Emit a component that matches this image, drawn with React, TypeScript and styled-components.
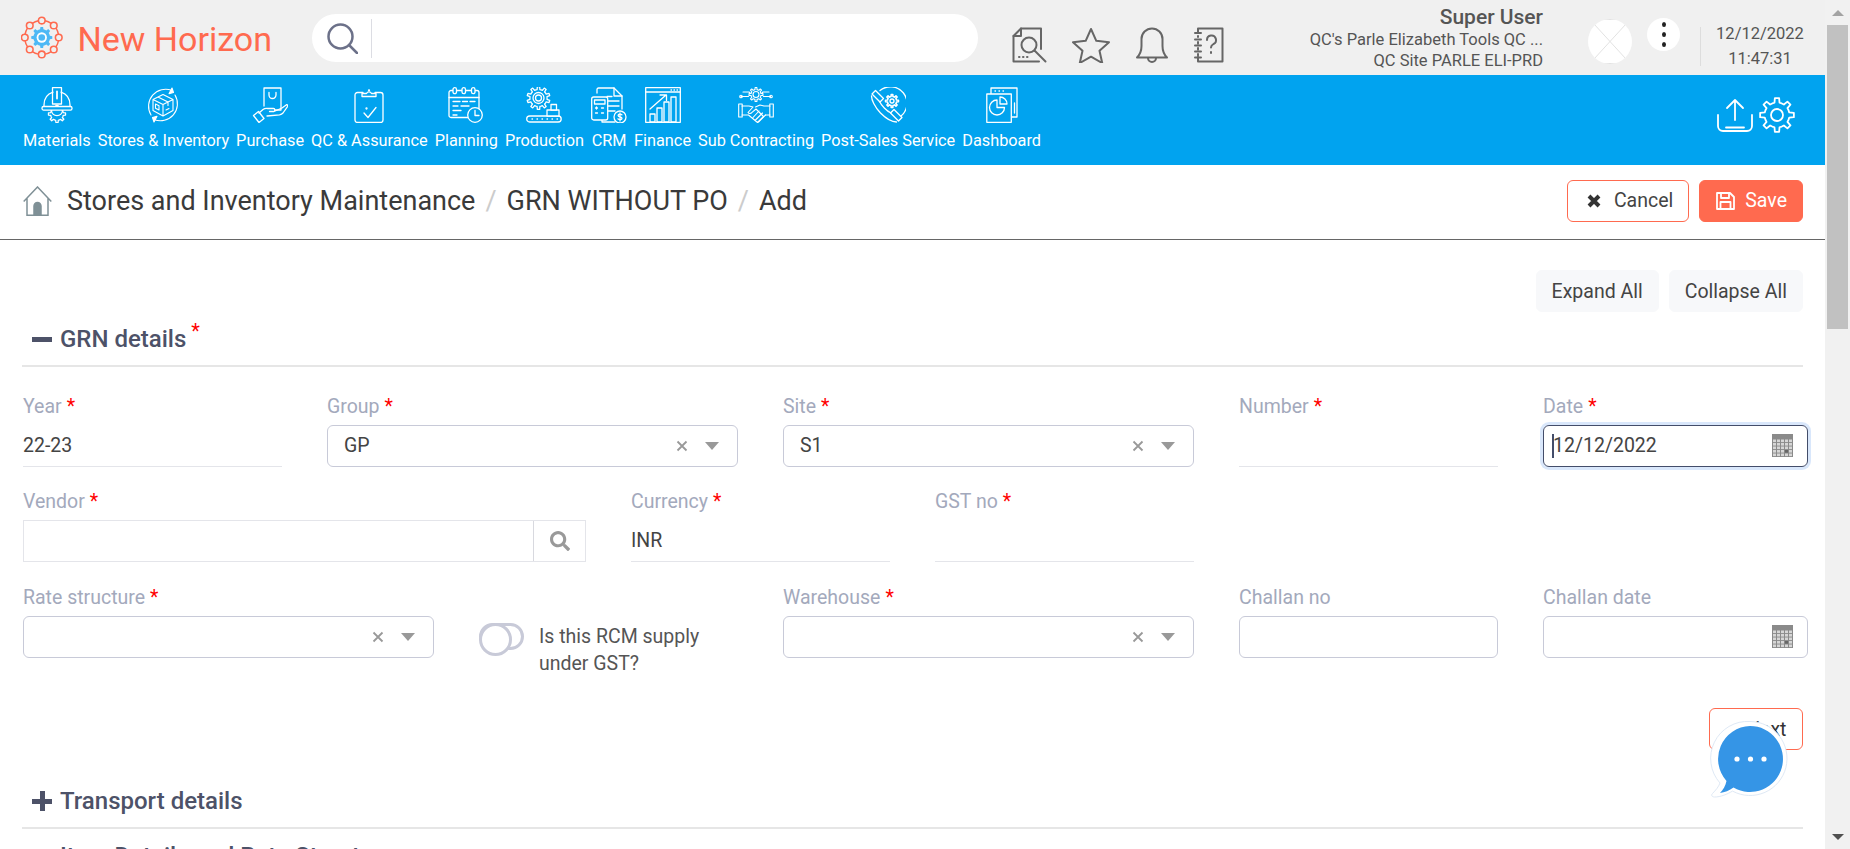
import React from 'react';
import styled, { createGlobalStyle } from 'styled-components';
import { FaSearch } from 'react-icons/fa';

const GlobalStyle = createGlobalStyle`
  html, body {
    margin: 0;
    padding: 0;
    overflow: hidden;
    background: #fff;
    font-family: Roboto, "Liberation Sans", sans-serif;
  }
  * { box-sizing: border-box; }
`;

const BLUE = '#01a3ef';
const CORAL = '#ff6a4f';

const Frame = styled.div`
  position: relative;
  display: flex;
  width: 1850px;
  height: 849px;
  overflow: hidden;
`;

const Main = styled.div`
  width: 1825px;
  flex: none;
`;

const ScrollTrack = styled.div`
  width: 25px;
  height: 849px;
  background: #f1f1f1;
  display: flex;
  flex-direction: column;
  align-items: center;
`;

const ScrollArrow = styled.div<{ $down?: boolean }>`
  height: 25px;
  width: 100%;
  flex: none;
  display: flex;
  align-items: center;
  justify-content: center;
  &::before {
    content: '';
    border-left: 6px solid transparent;
    border-right: 6px solid transparent;
    ${(p) => (p.$down ? 'border-top: 6px solid #505050;' : 'border-bottom: 6px solid #a3a3a3;')}
  }
`;

const ScrollThumb = styled.div`
  width: 21px;
  height: 304px;
  flex: none;
  background: #c1c1c1;
`;

const ScrollSpacer = styled.div`
  flex: 1;
`;

const TopBar = styled.header`
  height: 75px;
  background: #f0f0f0;
  display: flex;
  align-items: center;
  padding-left: 21px;
`;

const Brand = styled.div`
  display: flex;
  align-items: center;
  gap: 15px;
  width: 251px;
  flex: none;
  color: ${CORAL};
  font-size: 34px;
  line-height: 45px;
  white-space: nowrap;
`;

const BrandName = styled.span`
  padding-top: 3px;
`;

const SearchPill = styled.div`
  width: 666px;
  height: 48px;
  flex: none;
  margin-left: 40px;
  margin-top: 1px;
  border-radius: 24px;
  background: #fff;
  display: flex;
  align-items: center;
  padding-left: 15px;
`;

const SearchDivider = styled.div`
  width: 1px;
  height: 39px;
  margin-left: 13px;
  background: #dcdde3;
`;

const TopIcons = styled.div`
  display: flex;
  align-items: center;
  gap: 24px;
  margin-left: 34px;
  margin-top: 15px;
  flex: none;
`;

const UserBlock = styled.div`
  width: 319px;
  flex: none;
  text-align: right;
  color: #555;
  margin-top: 3px;
`;

const UserName = styled.div`
  font-size: 21px;
  font-weight: 500;
  line-height: 25px;
  margin-top: -2px;
  color: #555;
`;

const UserLine = styled.div`
  font-size: 16.5px;
  line-height: 20.5px;
`;

const Avatar = styled.div`
  width: 44px;
  height: 45px;
  flex: none;
  margin-left: 45px;
  margin-top: 8px;
  border-radius: 50%;
  background: #fff;
  overflow: hidden;
`;

const KebabButton = styled.div`
  width: 33px;
  height: 33px;
  flex: none;
  margin-left: 15px;
  margin-bottom: 6px;
  border-radius: 50%;
  background: #fff;
  display: flex;
  flex-direction: column;
  align-items: center;
  justify-content: center;
  gap: 5px;
`;

const KebabDot = styled.span`
  width: 4px;
  height: 5px;
  border-radius: 50%;
  background: #222;
`;

const TimeBlock = styled.div`
  width: 119px;
  height: 39px;
  flex: none;
  margin-left: 20px;
  margin-top: 18px;
  border-left: 1px solid #dddddd;
  display: flex;
  flex-direction: column;
  justify-content: center;
  align-items: center;
  font-size: 16.5px;
  line-height: 24.5px;
  color: #555;
`;

const NavBar = styled.nav`
  height: 90px;
  background: ${BLUE};
  display: flex;
  align-items: flex-start;
  justify-content: space-between;
  padding: 12px 30px 0 23px;
`;

const NavList = styled.div`
  display: flex;
  gap: 7px;
`;

const NavItem = styled.div`
  display: flex;
  flex-direction: column;
  align-items: center;
  color: #fff;
  font-size: 16.3px;
  line-height: 20px;
  white-space: nowrap;
  gap: 8px;
`;

const NavTools = styled.div`
  display: flex;
  align-items: center;
  gap: 6px;
  margin-top: 10px;
`;

const Crumbs = styled.div`
  height: 75px;
  border-bottom: 1.5px solid #666;
  display: flex;
  align-items: center;
  justify-content: space-between;
  padding: 0 22px 3px 23px;
`;

const CrumbTrail = styled.div`
  display: flex;
  align-items: center;
  font-size: 27px;
  color: #3a3a3a;
  white-space: nowrap;
`;

const CrumbHome = styled.span`
  display: flex;
  margin-right: 15px;
`;

const CrumbSlash = styled.span`
  color: #ccc;
  margin: 0 10px;
`;

const ButtonRow = styled.div`
  display: flex;
  gap: 10px;
  justify-content: flex-end;
`;

const Button = styled.button<{ $kind: 'outline' | 'solid' | 'soft' }>`
  height: 42px;
  padding: 0 15px;
  border-radius: 6px;
  display: flex;
  align-items: center;
  gap: 12px;
  font-family: inherit;
  font-size: 19.5px;
  white-space: nowrap;
  border: 1.5px solid
    ${(p) => (p.$kind === 'soft' ? '#f7f8fa' : CORAL)};
  background: ${(p) =>
    p.$kind === 'solid' ? CORAL : p.$kind === 'soft' ? '#f7f8fa' : '#fff'};
  color: ${(p) => (p.$kind === 'solid' ? '#fff' : '#444')};
`;

const CancelButton = styled(Button)`
  padding: 0 15px 0 19px;
  gap: 13px;
`;

const SaveButton = styled(Button)`
  padding: 0 15px 0 16px;
  gap: 10px;
`;

const Content = styled.div`
  padding: 0 22px 0 23px;
`;

const AllActions = styled(ButtonRow)`
  margin-top: 30px;
`;

const SectionHead = styled.div`
  height: 55px;
  margin-left: -1px;
  border-bottom: 2px solid #e6e6e6;
  display: flex;
  align-items: center;
  gap: 8px;
  padding-left: 10px;
  font-size: 24px;
  font-weight: 500;
  color: #4d5268;
  white-space: nowrap;
`;

const SectionStar = styled.sup`
  color: #ff0000;
  font-size: 20px;
  font-weight: 400;
  line-height: 0;
  margin-left: 5px;
  vertical-align: 9px;
`;

const SectionSign = styled.span<{ $open?: boolean }>`
  position: relative;
  width: 20px;
  height: 20px;
  flex: none;
  &::before {
    content: '';
    position: absolute;
    left: 0;
    right: 0;
    top: 8px;
    height: 5px;
    background: #4d5268;
  }
  &::after {
    content: '';
    display: ${(p) => (p.$open ? 'none' : 'block')};
    position: absolute;
    top: 0;
    bottom: 0;
    left: 8px;
    width: 5px;
    background: #4d5268;
  }
`;

const Form = styled.div`
  padding-top: 27.5px;
`;

const FormRow = styled.div`
  display: grid;
  grid-template-columns: repeat(12, 1fr);
  column-gap: 45px;
  height: 95.5px;
  margin-right: 1px;
`;

const FieldGroup = styled.div<{ $span: number }>`
  grid-column: span ${(p) => p.$span};
  min-width: 0;
`;

const Label = styled.div`
  height: 24px;
  margin-bottom: 6px;
  font-size: 19.5px;
  line-height: 24px;
  color: #a3a9bc;
`;

const Star = styled.span`
  color: #ff0000;
  margin-left: 5px;
`;

const LineField = styled.div`
  height: 42px;
  border-bottom: 1.5px solid #e4e5ea;
  display: flex;
  align-items: center;
  font-size: 19.5px;
  color: #444;
`;

const BoxField = styled.div<{ $focus?: boolean; $wide?: boolean }>`
  height: 42px;
  border: 1.5px solid ${(p) => (p.$focus ? '#434d6a' : '#c8cad8')};
  border-radius: 6px;
  display: flex;
  align-items: center;
  font-size: 19.5px;
  color: #444;
  padding: 0 14px 0 16px;
  ${(p) => (p.$wide ? 'margin-right: -6px;' : '')}
  ${(p) => (p.$focus ? 'box-shadow: 0 0 0 3px rgba(120, 170, 240, 0.28); padding-left: 8px;' : '')}
`;

const FieldValue = styled.span`
  flex: 1;
  min-width: 0;
`;

const Caret = styled.span`
  width: 2px;
  height: 24px;
  margin-right: -1px;
  flex: none;
  background: #434d6a;
`;

const ClearMark = styled.span`
  display: flex;
  margin-right: 17px;
`;

const SelectArrow = styled.span`
  border-left: 7px solid transparent;
  border-right: 7px solid transparent;
  border-top: 8px solid #999;
  margin-right: 4px;
`;

const VendorField = styled.div`
  height: 42px;
  border: 1.5px solid #e4e5ea;
  display: flex;
`;

const VendorInput = styled.div`
  flex: 1;
`;

const VendorSearch = styled.div`
  width: 52px;
  flex: none;
  border-left: 1.5px solid #d8d9df;
  display: flex;
  align-items: center;
  justify-content: center;
  color: #999;
  font-size: 20px;
`;

const ToggleWrap = styled.div`
  display: flex;
  gap: 15px;
  padding-top: 37px;
  font-size: 19.5px;
  line-height: 27px;
  color: #555;
  white-space: nowrap;
`;

const Toggle = styled.span`
  position: relative;
  width: 45px;
  height: 27px;
  flex: none;
  border: 3px solid #c8cad8;
  border-radius: 14px;
  &::before {
    content: '';
    position: absolute;
    left: -3px;
    top: -3px;
    width: 27px;
    height: 27px;
    border: 3px solid #c8cad8;
    border-radius: 50%;
    background: #fff;
  }
`;

const NextRow = styled(ButtonRow)`
  margin-top: 27px;
  margin-bottom: 24px;
`;

const NextButton = styled(Button)`
  width: 94px;
  justify-content: flex-end;
  padding: 0 15.5px 0 0;
  color: #333;
`;

const ChatBubble = styled.div`
  position: absolute;
  left: 1710px;
  top: 718px;
  width: 80px;
  height: 82px;
  display: flex;
`;

const Required = () => <Star>*</Star>;

const gearPath = (cx: number, cy: number, outer: number, inner: number, teeth: number) => {
  const pts: string[] = [];
  const step = (Math.PI * 2) / teeth;
  for (let i = 0; i < teeth; i++) {
    const a = i * step - Math.PI / 2;
    const seq: [number, number][] = [
      [inner, a - step * 0.5],
      [inner, a - step * 0.26],
      [outer, a - step * 0.16],
      [outer, a + step * 0.16],
      [inner, a + step * 0.26],
    ];
    seq.forEach(([r, t]) => {
      pts.push(`${(cx + r * Math.cos(t)).toFixed(2)} ${(cy + r * Math.sin(t)).toFixed(2)}`);
    });
  }
  return `M${pts.join('L')}Z`;
};

const Line = ({ children, w = 36, h = 36, sw = 1.3, color = '#fff' }: { children: React.ReactNode; w?: number; h?: number; sw?: number; color?: string }) => (
  <svg width={w} height={h} viewBox={`0 0 ${w} ${h}`} fill="none" stroke={color} strokeWidth={sw} strokeLinecap="round" strokeLinejoin="round">
    {children}
  </svg>
);

const LogoIcon = () => {
  const nodes = Array.from({ length: 8 }, (_, i) => {
    const a = (i * Math.PI) / 4 - Math.PI / 2;
    return [22.5 + 18.4 * Math.cos(a), 22.5 + 18.4 * Math.sin(a)];
  });
  return (
    <svg width="45" height="45" viewBox="0 0 45 45">
      <circle cx="22.5" cy="22.5" r="18.4" fill="none" stroke={CORAL} strokeWidth="1.6" />
      {nodes.map(([x, y], i) => (
        <circle key={i} cx={x} cy={y} r="3.6" fill="#f0f0f0" stroke={CORAL} strokeWidth="1.7" />
      ))}
      <path d={gearPath(22.5, 22.5, 11.5, 9, 8)} fill="#4db8f5" />
      <circle cx="22.5" cy="22.5" r="5.6" fill="#fff" />
      <circle cx="22.5" cy="22.5" r="3.6" fill="#4db8f5" />
    </svg>
  );
};

const navIcons: Record<string, React.ReactNode> = {
  materials: (
    <Line>
      <path d={gearPath(18, 27, 8.6, 6.4, 8)} />
      <path d="M12.5 24a5.6 5.6 0 0 0 11 0" />
      <path d="M5 21v-3C5 11.5 8.5 7 14 5.2M31 21v-3c0-6.5-3.5-11-9-12.8" />
      <rect x="3" y="19.5" width="30" height="3.6" rx="1.6" fill={BLUE} />
      <rect x="13.5" y="0.7" width="9" height="16.3" />
      <path d="M18 4.5v7" strokeWidth="1.8" />
    </Line>
  ),
  stores: (
    <Line sw={1.1}>
      <path d="M6 28A17 17 0 0 1 27 3.5M30 8A17 17 0 0 1 9 32.5" />
      <path d="M27 1l1.5 4.5-4.5 1.2zM9 35l-1.5-4.5 4.5-1.2z" fill="#fff" />
      <path d="M18 7.5l10 5v11l-10 5.5-10-5.5v-11zM8 12.5l10 5 10-5M18 17.5V29M13 10l10 5v3.5" />
      <path d="M10.5 17l3.5 1.8v4.2l-3.5-1.8zM21 23l3-1.4" />
    </Line>
  ),
  purchase: (
    <Line>
      <path d="M12 19V1h17v22h-6" />
      <path d="M17 5.5v2.5a3.5 3.5 0 0 0 7 0V5.5" />
      <path d="M7 26l4-3.5c1.5-1.2 3-1.5 5-1h5.5c1.8 0 1.8 3 0 3H17.5M22 24.5l8-3.5 4.5-3.3c1-.2 1.5.8 1 1.8L31 26c-1 1.2-2 1.6-3.5 1.8L15 29" />
      <path d="M1.5 28.5l5-4 5.5 7-5 4z" />
    </Line>
  ),
  qc: (
    <Line w={30}>
      <path d="M9 5.5H3.5A2.5 2.5 0 0 0 1 8v25a2.5 2.5 0 0 0 2.5 2.5h23A2.5 2.5 0 0 0 29 33V8a2.5 2.5 0 0 0-2.5-2.5H21" />
      <path d="M8 9.5V6.5h4.5a2.8 2.8 0 0 1 5 0H22v3z" />
      <circle cx="15" cy="3.3" r="0.5" />
      <path d="M10 26l4 4.5 8-10" />
      <circle cx="12.5" cy="21.5" r="0.5" />
    </Line>
  ),
  planning: (
    <Line>
      <path d="M20 30.5H3a2 2 0 0 1-2-2V5.5a2 2 0 0 1 2-2h26a2 2 0 0 1 2 2v16" />
      <path d="M1 10.5h30" />
      <rect x="5" y="0.7" width="3.5" height="6" rx="1.7" fill={BLUE} />
      <rect x="14" y="0.7" width="3.5" height="6" rx="1.7" fill={BLUE} />
      <rect x="23.5" y="0.7" width="3.5" height="6" rx="1.7" fill={BLUE} />
      <path d="M5 14.5h7M14.5 14.5h5M22 14.5h5M5 19h5M13 19h8M5 23.5h8M5 28h4" />
      <circle cx="27" cy="28" r="7.3" fill={BLUE} />
      <path d="M27 23.5V28.5h4" />
    </Line>
  ),
  production: (
    <Line>
      <path d={gearPath(12.5, 11, 11.5, 8.6, 10)} />
      <circle cx="12.5" cy="11" r="5.5" />
      <circle cx="12.5" cy="11" r="3" />
      <rect x="0.7" y="29" width="34.5" height="6" rx="3" fill={BLUE} />
      <path d="M6 32h.5M11 32h.5M16 32h.5M21 32h.5M26 32h.5M31 32h.5" />
      <rect x="21" y="23" width="12" height="6" fill={BLUE} />
      <rect x="25" y="17.5" width="5.5" height="5.5" fill={BLUE} />
    </Line>
  ),
  crm: (
    <Line>
      <path d="M6 6V2.5A1.5 1.5 0 0 1 7.5 1H23l8 8v13" />
      <path d="M23 1v8h8" />
      <path d="M11 31.5V35h13" />
      <path d="M16 9.5h5M17 14h11M17 19h11M17 24h7" />
      <rect x="0.7" y="10" width="16" height="23" rx="2" fill={BLUE} />
      <rect x="3.5" y="13" width="10.5" height="4" />
      <path d="M4.5 21h2M10.5 21h2M5.5 20v2M4.5 26h2M10.5 26h2" />
      <circle cx="29" cy="30" r="6" fill={BLUE} />
      <path d="M31 27.8c-.8-1-3.9-1-3.9.7s3.9 1 3.9 2.8-3.2 1.6-4 .5M29 26v8" />
    </Line>
  ),
  finance: (
    <Line>
      <rect x="0.7" y="0.7" width="34.6" height="34.6" />
      <path d="M.7 5h34.6" />
      <path d="M29 3h.5M32 3h.5M26 3h.5" />
      <path d="M5 22L21 8M15 8h6.5v5.5" />
      <rect x="5" y="27" width="5" height="8" />
      <rect x="12" y="21" width="5" height="14" />
      <rect x="19" y="15" width="5" height="20" />
      <rect x="26" y="10" width="5" height="25" />
    </Line>
  ),
  sub: (
    <Line sw={1.1}>
      <path d={gearPath(18, 7.5, 7, 5, 8)} />
      <circle cx="18" cy="7.5" r="3" />
      <path d="M5 5h6M25 5h6M3 9.5h7.5M25.5 9.5h7M11 5l1 1M25 5l-1 1" />
      <circle cx="3" cy="9.5" r="1.3" />
      <circle cx="33" cy="9.5" r="1.3" />
      <rect x="0.7" y="17" width="3.5" height="13" />
      <rect x="31.8" y="17" width="3.5" height="13" />
      <path d="M4 19h7l4 1-5 5.5c1 1.5 3 1 4-.2L18 22l7.5 7.5-6 6-9-7.5H4M32 19h-6l-4-1-4.5 2M32 28h-4.5" />
      <path d="M20.5 35l7-7M17.5 33l7-7M15 30.5l6-6.5" />
    </Line>
  ),
  post: (
    <Line>
      <path d="M10 3.5A16.5 16.5 0 0 1 31 29" />
      <path d="M5.5 3.5l8 8-3.5 3.5-8-8z" fill={BLUE} />
      <path d="M24 22.5l8 8-3.5 3.5-8-8z" fill={BLUE} />
      <path d="M1.5 9c0 3.5 3 11 9 17s12 9 16 9" />
      <path d="M9.5 14.5c2 4 7 9.5 11.5 11.5" />
      <path d={gearPath(22, 14, 6.5, 4.6, 8)} strokeWidth="1.6" />
      <circle cx="22" cy="14" r="2" />
    </Line>
  ),
  dashboard: (
    <Line w={32}>
      <path d="M5 8V1h26v29h-6" />
      <path d="M9 4h.5M13 4h.5M17 4h.5" />
      <rect x="0.8" y="7" width="24.5" height="28.3" fill={BLUE} />
      <path d="M11 13a7.5 7.5 0 1 0 7.5 7.5H11z" />
      <path d="M14 10a7 7 0 0 1 7 7h-7z" />
      <path d="M28.5 16v10" />
    </Line>
  ),
};

const navItems = [
  { key: 'materials', text: 'Materials' },
  { key: 'stores', text: 'Stores & Inventory' },
  { key: 'purchase', text: 'Purchase' },
  { key: 'qc', text: 'QC & Assurance' },
  { key: 'planning', text: 'Planning' },
  { key: 'production', text: 'Production' },
  { key: 'crm', text: 'CRM' },
  { key: 'finance', text: 'Finance' },
  { key: 'sub', text: 'Sub Contracting' },
  { key: 'post', text: 'Post-Sales Service' },
  { key: 'dashboard', text: 'Dashboard' },
];

const CalendarIcon = () => {
  const cells: React.ReactNode[] = [];
  for (let r = 0; r < 5; r++) {
    for (let c = 0; c < 5; c++) {
      const dark = r === 3 && c === 3;
      cells.push(<rect key={`${r}-${c}`} x={1 + c * 4} y={5.5 + r * 3.5} width="3" height="2.6" fill={dark ? '#666' : '#d6d6d6'} />);
    }
  }
  return (
    <svg width="21" height="23" viewBox="0 0 21 23">
      <rect width="21" height="23" fill="#8a8a8a" />
      {cells}
    </svg>
  );
};

const ClearIcon = () => (
  <svg width="12" height="12" viewBox="0 0 12 12" stroke="#999" strokeWidth="1.8">
    <path d="M1.5 1.5l9 9M10.5 1.5l-9 9" />
  </svg>
);

const SelectBox = ({ value }: { value?: string }) => (
  <BoxField>
    <FieldValue>{value}</FieldValue>
    <ClearMark>
      <ClearIcon />
    </ClearMark>
    <SelectArrow />
  </BoxField>
);

const App = () => (
  <Frame>
    <GlobalStyle />
    <Main>
      <TopBar>
        <Brand>
          <LogoIcon />
          <BrandName>New Horizon</BrandName>
        </Brand>
        <SearchPill>
          <Line w={31} h={31} sw={2.5} color="#6c7189">
            <circle cx="13.5" cy="13.5" r="12" />
            <path d="M22.5 22.5l7.5 7.5" />
          </Line>
          <SearchDivider />
        </SearchPill>
        <TopIcons>
          <Line h={36} sw={2} color="#666">
            <path d="M29 22V1.5H9L1.5 9v25.5H27" />
            <path d="M9 1.5V9H1.5" />
            <circle cx="17" cy="18" r="7.5" />
            <path d="M22.5 23.5l11 11" />
            <path d="M7 30h.5M11 30h.5M15 30h.5" />
          </Line>
          <Line w={38} sw={2} color="#666">
            <path d="M19 2l5.3 11.8 12.7 1.4-9.5 8.6 2.7 12.2L19 29.7 7.8 36l2.7-12.2L1 15.2l12.7-1.4z" />
          </Line>
          <Line sw={2} color="#666">
            <path d="M3 30.5c3-3 4.5-6 4.5-11.5V12a10.5 10.5 0 0 1 21 0v7c0 5.5 1.5 8.5 4.5 11.5z" />
            <path d="M14 31a4 4 0 0 0 8 0" />
          </Line>
          <Line w={30} sw={2} color="#666">
            <path d="M4 6V1.5h24.5v33H4V30" />
            <path d="M1 6h6M1 12.5h6M1 18.5h6M1 24.5h6M1 30.5h6M4 9v1M4 15v1.5M4 21v1.5M4 27v1.5" />
            <path d="M13 13a4.5 4.5 0 1 1 6.5 4c-1.5.9-2.5 1.8-2.5 3.5" />
            <path d="M17 25v1" />
          </Line>
        </TopIcons>
        <UserBlock>
          <UserName>Super User</UserName>
          <UserLine>QC's Parle Elizabeth Tools QC ...</UserLine>
          <UserLine>QC Site PARLE ELI-PRD</UserLine>
        </UserBlock>
        <Avatar>
          <svg width="44" height="45" viewBox="0 0 44 45" stroke="#e2e2e2" strokeWidth="1">
            <path d="M6 5l32 35M38 5L6 40M0 0.5h44M0 44.5h44" />
          </svg>
        </Avatar>
        <KebabButton>
          <KebabDot />
          <KebabDot />
          <KebabDot />
        </KebabButton>
        <TimeBlock>
          <span>12/12/2022</span>
          <span>11:47:31</span>
        </TimeBlock>
      </TopBar>

      <NavBar>
        <NavList>
          {navItems.map((item) => (
            <NavItem key={item.key}>
              {navIcons[item.key]}
              {item.text}
            </NavItem>
          ))}
        </NavList>
        <NavTools>
          <Line h={34} sw={1.8}>
            <path d="M1 17v11a5 5 0 0 0 5 5h24a5 5 0 0 0 5-5V17" />
            <path d="M18 22V2M10 10l8-8 8 8M9 29.5h18" />
          </Line>
          <Line sw={1.8}>
            <path d={gearPath(18, 18, 17, 12.5, 8)} />
            <circle cx="18" cy="18" r="6" />
          </Line>
        </NavTools>
      </NavBar>

      <Crumbs>
        <CrumbTrail>
          <CrumbHome>
            <svg width="29" height="30" viewBox="0 0 29 30" fill="none" stroke="#7f9096" strokeWidth="1.5">
              <path d="M0.7 15.5L14.5 1l13.8 14.5M4 12v17.2h21V12" />
              <path d="M11 29.2V20a3.5 3.5 0 0 1 7 0v9.2z" fill="#7f9096" />
            </svg>
          </CrumbHome>
          Stores and Inventory Maintenance
          <CrumbSlash>/</CrumbSlash>
          GRN WITHOUT PO
          <CrumbSlash>/</CrumbSlash>
          Add
        </CrumbTrail>
        <ButtonRow>
          <CancelButton $kind="outline">
            <svg width="14" height="14" viewBox="0 0 14 14" stroke="#333" strokeWidth="4">
              <path d="M2 2l10 10M12 2L2 12" />
            </svg>
            Cancel
          </CancelButton>
          <SaveButton $kind="solid">
            <Line w={19} h={18} sw={1.8}>
              <path d="M1 1h13l4 4v12H1z" />
              <path d="M5 1v5h8V1M4.5 17v-7h10v7" />
            </Line>
            Save
          </SaveButton>
        </ButtonRow>
      </Crumbs>

      <Content>
        <AllActions>
          <Button $kind="soft">Expand All</Button>
          <Button $kind="soft">Collapse All</Button>
        </AllActions>

        <SectionHead>
          <SectionSign $open />
          <span>
            GRN details
            <SectionStar>*</SectionStar>
          </span>
        </SectionHead>

        <Form>
          <FormRow>
            <FieldGroup $span={2}>
              <Label>Year<Required /></Label>
              <LineField>22-23</LineField>
            </FieldGroup>
            <FieldGroup $span={3}>
              <Label>Group<Required /></Label>
              <SelectBox value="GP" />
            </FieldGroup>
            <FieldGroup $span={3}>
              <Label>Site<Required /></Label>
              <SelectBox value="S1" />
            </FieldGroup>
            <FieldGroup $span={2}>
              <Label>Number<Required /></Label>
              <LineField />
            </FieldGroup>
            <FieldGroup $span={2}>
              <Label>Date<Required /></Label>
              <BoxField $focus $wide>
                <Caret />
                <FieldValue>12/12/2022</FieldValue>
                <CalendarIcon />
              </BoxField>
            </FieldGroup>
          </FormRow>

          <FormRow>
            <FieldGroup $span={4}>
              <Label>Vendor<Required /></Label>
              <VendorField>
                <VendorInput />
                <VendorSearch>
                  <FaSearch />
                </VendorSearch>
              </VendorField>
            </FieldGroup>
            <FieldGroup $span={2}>
              <Label>Currency<Required /></Label>
              <LineField>INR</LineField>
            </FieldGroup>
            <FieldGroup $span={2}>
              <Label>GST no<Required /></Label>
              <LineField />
            </FieldGroup>
          </FormRow>

          <FormRow>
            <FieldGroup $span={3}>
              <Label>Rate structure<Required /></Label>
              <SelectBox />
            </FieldGroup>
            <FieldGroup $span={2}>
              <ToggleWrap>
                <Toggle />
                <span>
                  Is this RCM supply
                  <br />
                  under GST?
                </span>
              </ToggleWrap>
            </FieldGroup>
            <FieldGroup $span={3}>
              <Label>Warehouse<Required /></Label>
              <SelectBox />
            </FieldGroup>
            <FieldGroup $span={2}>
              <Label>Challan no</Label>
              <BoxField />
            </FieldGroup>
            <FieldGroup $span={2}>
              <Label>Challan date</Label>
              <BoxField $wide>
                <FieldValue />
                <CalendarIcon />
              </BoxField>
            </FieldGroup>
          </FormRow>
        </Form>

        <NextRow>
          <NextButton $kind="outline">» Next</NextButton>
        </NextRow>

        <SectionHead>
          <SectionSign />
          <span>Transport details</span>
        </SectionHead>
        <SectionHead>
          <SectionSign $open />
          <span>Item Details and Rate Structure</span>
        </SectionHead>
      </Content>
    </Main>

    <ScrollTrack>
      <ScrollArrow />
      <ScrollThumb />
      <ScrollSpacer />
      <ScrollArrow $down />
    </ScrollTrack>

    <ChatBubble>
      <svg width="80" height="82" viewBox="0 0 80 82">
        <path d="M40 3.5a37 37 0 1 1-17.5 69.6c-5 3-12 6-18 5.9-3-.2-3.5-2-2-3.5 3-3 6-6.5 7.5-10.5A37 37 0 0 1 40 3.5z" fill="#fff" stroke="#dfe9f5" strokeWidth="1" />
        <path d="M40 8a33 33 0 1 1-16.5 61.6c-4 3-9 5-13.5 5.4 3-3 5.5-7 6.5-12A33 33 0 0 1 40 8z" fill="#3595e6" />
        <circle cx="27" cy="41" r="2.6" fill="#fff" />
        <circle cx="40.5" cy="41" r="2.6" fill="#fff" />
        <circle cx="54" cy="41" r="2.6" fill="#fff" />
      </svg>
    </ChatBubble>
  </Frame>
);

export default App;
